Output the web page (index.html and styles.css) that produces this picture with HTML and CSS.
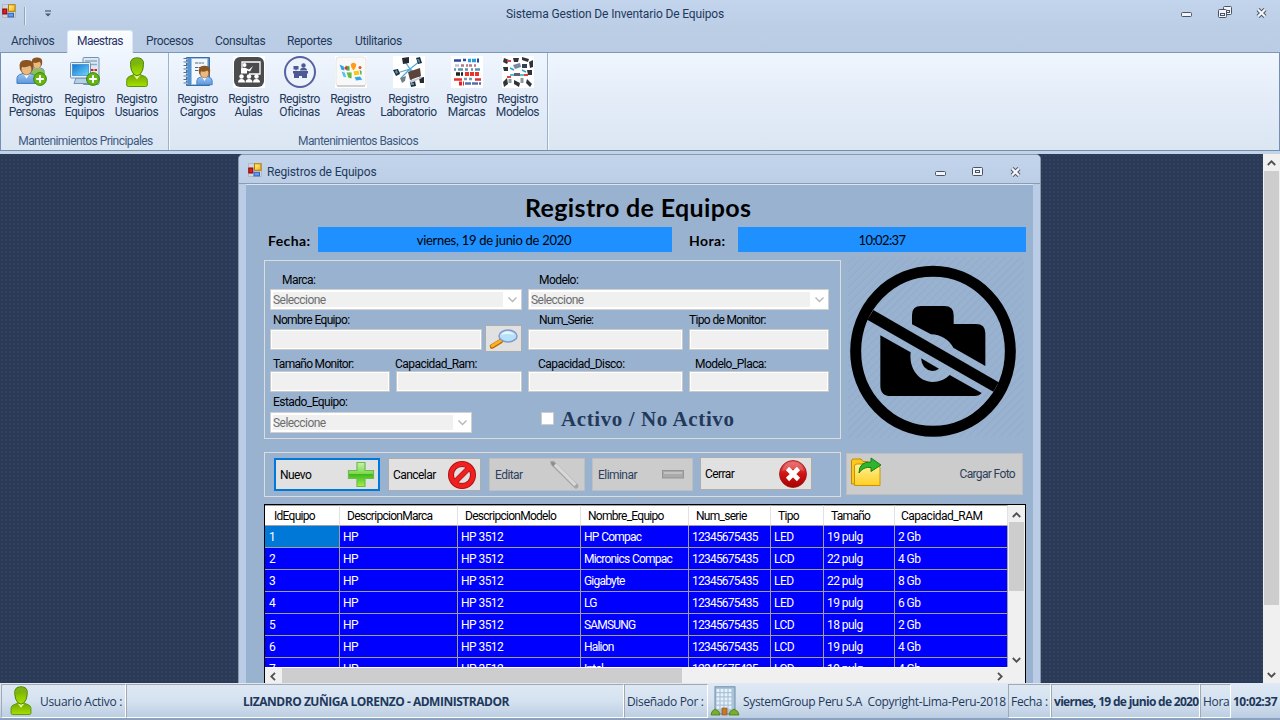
FILE: index.html
```html
<!DOCTYPE html>
<html lang="es">
<head>
<meta charset="utf-8">
<title>Sistema Gestion De Inventario De Equipos</title>
<link rel="stylesheet" href="styles.css">
</head>
<body>
<svg class="defs" width="0" height="0">
  <defs>
    <linearGradient id="gGreen" x1="0" y1="0" x2="0" y2="1"><stop offset="0" stop-color="#6fa800"/><stop offset="1" stop-color="#a8e000"/></linearGradient>
    <linearGradient id="gBlue" x1="0" y1="0" x2="0" y2="1"><stop offset="0" stop-color="#9cc8f4"/><stop offset="1" stop-color="#5d97dc"/></linearGradient>
    <linearGradient id="gScreen" x1="0" y1="0" x2="1" y2="1"><stop offset="0" stop-color="#1277d0"/><stop offset="1" stop-color="#6fd4fb"/></linearGradient>
    <linearGradient id="gYellow" x1="0" y1="0" x2="1" y2="1"><stop offset="0" stop-color="#fff3a0"/><stop offset="1" stop-color="#f0b400"/></linearGradient>
    <linearGradient id="gFolder" x1="0" y1="0" x2="0" y2="1"><stop offset="0" stop-color="#fff09a"/><stop offset="1" stop-color="#ffcf22"/></linearGradient>
    <linearGradient id="gPlus" x1="0" y1="0" x2="0" y2="1"><stop offset="0" stop-color="#c8f2a8"/><stop offset=".46" stop-color="#7fd850"/><stop offset=".5" stop-color="#3fb81c"/><stop offset="1" stop-color="#a4f04a"/></linearGradient>
    <linearGradient id="gRed" x1="0" y1="0" x2="0" y2="1"><stop offset="0" stop-color="#e86060"/><stop offset=".5" stop-color="#cf1414"/><stop offset="1" stop-color="#a80000"/></linearGradient>
    <symbol id="user" viewBox="0 0 22 31">
      <path d="M.7 28 V23.500 Q.7 20 5 18.800 L8 17.500 H14 L17 18.800 Q21.300 20 21.300 23.500 V28 Q21.300 29.500 19.500 29.500 H2.500 Q.7 29.500 .7 28Z" fill="url(#gGreen)" stroke="#5c9410" stroke-width="1"/>
      <path d="M7.500 18 L11 22.500 L14.500 18 Z" fill="#e6f3a0"/>
      <path d="M4.500 7.500 Q4 .8 11 .8 Q18 .8 17.500 7.500 Q17.500 14 14 17.500 Q11 20 8 17.500 Q4.500 14 4.500 7.500Z" fill="url(#gGreen)" stroke="#4b8400" stroke-width="1"/>
      <path d="M5 8.500 Q8 9.500 12 6.800 Q15 6.300 17 8.500 Q17.500 1.300 11 1.300 Q4.500 1.300 5 8.500Z" fill="#7cb414"/>
    </symbol>
    <symbol id="man" viewBox="0 0 22 26">
      <path d="M1 25 V20 Q1 16 6 15 L8 14 H14 L16 15 Q21 16 21 20 V25Z" fill="url(#gBlue)" stroke="#3f78c4" stroke-width="1"/>
      <path d="M8 15 L11 20 L14 15Z" fill="#fff"/>
      <ellipse cx="11" cy="9" rx="6" ry="7" fill="#e9b982" stroke="#94602a" stroke-width=".8"/>
      <path d="M4 10 Q2 0 11 .5 Q20 0 18 10 L16 13 Q17 8 14.500 6.500 Q10 9 6.500 7.500 Q5 9 6 13Z" fill="#8a5520"/>
    </symbol>
    <symbol id="add" viewBox="0 0 14 14">
      <circle cx="7" cy="7" r="6.400" fill="#66b510" stroke="#2f8000" stroke-width=".9"/><path d="M7 3.200V10.800M3.200 7H10.800" stroke="#fff" stroke-width="2"/>
    </symbol>
    <symbol id="app" viewBox="0 0 14 14">
      <path d="M.5 .5H13.500V13.500H.5Z" fill="#cdd5de" stroke="#b5b9bc"/>
      <rect x="6.500" y=".8" width="6.500" height="6.500" fill="url(#gYellow)" stroke="#b67800"/>
      <rect x=".8" y="5" width="4" height="5" fill="#d62222" stroke="#8d0000"/>
      <rect x="6" y="9.300" width="5.500" height="3.600" fill="#5f9cf0" stroke="#2f62c0"/>
    </symbol>
    <symbol id="close" viewBox="0 0 11 10">
      <path d="M2 1.500 L9 8.500 M9 1.500 L2 8.500" stroke="#4a5364" stroke-width="4.200"/><path d="M2 1.500 L9 8.500 M9 1.500 L2 8.500" stroke="#f3f6fb" stroke-width="2.300"/>
    </symbol>
  </defs>
</svg>

<header class="titlebar">
  <svg class="app-icon" width="14" height="14"><use href="#app"/></svg>
  <span class="quick-sep"></span>
  <svg class="quick-menu" width="6" height="7" viewBox="0 0 6 7"><path d="M0 1H6" stroke="#4b5668" stroke-width="1.200"/><path d="M0 3.500H6L3 6.500Z" fill="#4b5668"/></svg>
  <span class="app-title">Sistema Gestion De Inventario De Equipos</span>
  <div class="win-controls">
    <svg width="11" height="5" class="min"><rect x=".5" y=".5" width="10" height="4" rx="1" fill="#f1f5fa" stroke="#4a5364"/></svg>
    <svg width="14" height="12" class="restore"><rect x="5.500" y=".5" width="8" height="8" rx="1" fill="#f1f5fa" stroke="#4a5364"/><rect x="7.500" y="4.500" width="4" height="2" fill="none" stroke="#4a5364"/><rect x=".5" y="3.500" width="8" height="8" rx="1" fill="#f1f5fa" stroke="#4a5364"/><rect x="2.500" y="7.500" width="4" height="2" fill="#f1f5fa" stroke="#4a5364"/></svg>
    <svg width="11" height="10" class="cls"><use href="#close"/></svg>
  </div>
</header>

<nav class="tabs">
  <span class="tab archivos">Archivos</span>
  <span class="tab active">Maestras</span>
  <span class="tab procesos">Procesos</span>
  <span class="tab consultas">Consultas</span>
  <span class="tab reportes">Reportes</span>
  <span class="tab utilitarios">Utilitarios</span>
</nav>

<section class="ribbon">
  <div class="group principal">
    <div class="tools">
      <div class="tool w52">
        <svg width="32" height="32"><use href="#man" x="13" y="0" width="16" height="21"/><path d="M15 20V17Q15 14 19 13H25Q29 14 29 17V20Z" fill="#8dbf55"/><use href="#man" x="0" y="3" width="21" height="26"/><use href="#add" x="17" y="16" width="14" height="14"/></svg>
        <span>Registro<br>Personas</span></div>
      <div class="tool w53">
        <svg width="32" height="32"><rect x="14" y="1.500" width="16" height="27" rx="1" fill="#dbe8f3" stroke="#6f93b5"/><path d="M16 5H28M16 8.500H28" stroke="#8eabc4" stroke-width="1.300"/><path d="M22 14h6" stroke="#e02020" stroke-width="2" stroke-dasharray="2.500 1"/><path d="M7 22L5 27.500H19L17 22Z" fill="#b8d0e4" stroke="#6f93b5"/><rect x="1.500" y="6.500" width="20" height="15.500" rx="1" fill="#e9f2fa" stroke="#6f93b5"/><rect x="3.500" y="8.500" width="16" height="11" fill="url(#gScreen)" stroke="#2a78c0" stroke-width=".6"/><use href="#add" x="17" y="16" width="14" height="14"/></svg>
        <span>Registro<br>Equipos</span></div>
      <div class="tool">
        <svg width="32" height="32"><use href="#user" x="5" y="1" width="22" height="31"/></svg>
        <span>Registro<br>Usuarios</span></div>
    </div>
    <div class="group-name">Mantenimientos Principales</div>
  </div>
  <div class="group basicos">
    <div class="tools">
      <div class="tool">
        <svg width="32" height="32"><path d="M4.500 1.500H27.500V29.500H4.500Z" fill="#5592cf" stroke="#3a6ea5"/><path d="M9.500 2.500H25.500V28.500H9.500Z" fill="#f2f8fd" stroke="#9cc0e0" stroke-width=".7"/><path d="M3.500 2V29" stroke="#fff" stroke-width="4" stroke-dasharray="1.500 2"/><path d="M3.500 2V29" stroke="#4d6f92" stroke-width="4" stroke-dasharray="1 2.500"/><path d="M13 7h9M13 11.500h5M13 14.500h5" stroke="#567" stroke-width="1" stroke-dasharray="3 .6"/><use href="#man" x="14" y="9" width="17" height="21"/></svg>
        <span>Registro<br>Cargos</span></div>
      <div class="tool">
        <svg width="32" height="32"><rect width="32" height="32" fill="#fff"/><rect x="1" y="1" width="30" height="30" rx="6" fill="#4b4b4d"/><path d="M9 15V6H27V18H16" fill="none" stroke="#fff" stroke-width="1.300"/><circle cx="11.500" cy="9" r="2" fill="#fff"/><path d="M8 17.500V13Q9 11.500 12 11.800L16 13.500L20 10L17 15.500L14 14.500V17.500Z" fill="#fff"/><g fill="#fff"><circle cx="8.500" cy="20.500" r="2.200"/><circle cx="16" cy="20.500" r="2.200"/><circle cx="23.500" cy="20.500" r="2.200"/><path d="M5 26.500Q5 23 8.500 23Q12 23 12 26.500ZM12.500 26.500Q12.500 23 16 23Q19.500 23 19.500 26.500ZM20 26.500Q20 23 23.500 23Q27 23 27 26.500Z"/></g></svg>
        <span>Registro<br>Aulas</span></div>
      <div class="tool">
        <svg width="32" height="32"><circle cx="16" cy="16" r="15" fill="#edf3fb" stroke="#5661a0" stroke-width="2"/><g fill="#4c5995"><path d="M9 15H24V17.500H23V22H18V20H15V22H10V17.500H9Z"/><circle cx="19.500" cy="9.500" r="2.200"/><path d="M16 14.500Q16 11.800 19.500 11.800Q23 11.800 23 14.500Z"/><path d="M9.500 10H14.500V13.500H12.500V14.500H11.500V13.500H9.500Z"/></g></svg>
        <span>Registro<br>Oficinas</span></div>
      <div class="tool">
        <svg width="32" height="32"><rect width="32" height="32" fill="#fff"/><rect x="1" y="1" width="30" height="29" rx="3" fill="#f8f8f8" stroke="#e4e4e4"/><path d="M2 30H30" stroke="#c6c6c6" stroke-width="1.500"/><g stroke="#fff" stroke-width=".8"><path d="M4 8L9 10L10 15L6 14Z" fill="#30a0e0"/><path d="M10 9L15 10V15L11 15Z" fill="#4caf50"/><path d="M6 15L10 16L12 22L8 21Z" fill="#58c1f0"/><path d="M11 16L17 16L17 23L13 22Z" fill="#65b946"/><path d="M18 15L24 14L25 19L19 20Z" fill="#ffc61a"/><path d="M19 21L25 20L28 24L21 25Z" fill="#32a6df"/><path d="M24 13L27 15L27 19L25 19Z" fill="#4caf50"/></g><path d="M18.500 14.500Q15 10 16 8Q18.500 5.500 21 8Q22 10 18.500 14.500Z" fill="#ff9d16"/><circle cx="11" cy="12" r="1.600" fill="#e53525"/><circle cx="25" cy="11.500" r="1.500" fill="#e55025"/></svg>
        <span>Registro<br>Areas</span></div>
      <div class="tool w65">
        <svg width="32" height="32"><rect width="32" height="32" fill="#fff"/><path d="M4 17L17 13L27 5M17 13L11 4M17 13L19 28M17 13L29 23M17 13L8 22" stroke="#55a8d4" stroke-width="1.300" fill="none"/><g fill="#252a30"><path d="M9 2L16 1L16 7L10 8Z"/><path d="M23 2L27 1L29 7L25 8Z"/><path d="M0 14L5 13L7 18L3 20Z"/><path d="M17 26L22 25L23 30L18 31Z"/><path d="M26 22L31 21L31 27L27 27Z"/></g><path d="M15 16L27 12L28 20L17 24Z" fill="#5a443b"/><path d="M7 22L13 20L12 25L9 27Z" fill="#73808c"/><path d="M16 25L28 21L29 22L18 27Z" fill="#ccd"/><g fill="#3f98c8"><path d="M2 15L4 14L5 17L3 18Z"/><path d="M24 3L26 3L27 6L26 7Z"/><path d="M18 27h3v2h-3z"/></g></svg>
        <span>Registro<br>Laboratorio</span></div>
      <div class="tool">
        <svg width="32" height="32"><rect width="32" height="32" fill="#fff"/><g fill="none" stroke-width="2.400"><path d="M3 4.500H10M12 4H15" stroke="#2748a0"/><path d="M17 4.500H20M21 4.500H25" stroke="#2a9be0" stroke-width="3.500"/><path d="M26 4.500H28" stroke="#2748a0" stroke-width="4"/><path d="M10 9.500H26" stroke="#b8777f" stroke-dasharray="3 2 2 1"/><path d="M4 9.500H8" stroke="#b8c3d0"/><path d="M3 13.500H29" stroke="#5a93ad" stroke-dasharray="2 2 5 2 3 3"/><path d="M5 18H12" stroke="#222" stroke-width="3.500" stroke-dasharray="4 1"/><path d="M14 18H28" stroke="#e8352a" stroke-width="4" stroke-dasharray="4 1"/><path d="M3 23.500H11M24 23.500H30" stroke="#e23131"/><path d="M13 23H22" stroke="#7d97b5" stroke-dasharray="3 2"/></g><path d="M14 27.500H30" stroke="#5370b0" stroke-width="2.500" stroke-dasharray="6 1"/><path d="M8 27.500H13" stroke="#d22" stroke-width="4" stroke-dasharray="3 1"/></svg>
        <span>Registro<br>Marcas</span></div>
      <div class="tool">
        <svg width="32" height="32"><rect width="32" height="32" fill="#fff"/><g fill="#30333a"><path d="M2 2L7 4L5 8L1 6Z"/><path d="M11 2H17L16 6H12Z"/><path d="M20 1L27 3L26 6L20 4Z"/><path d="M27 6L31 4V11L28 12Z"/><path d="M1 11H6V15H2Z"/><path d="M25 14H30V19H26Z"/><path d="M1 26L5 22L6 28L2 31Z"/><path d="M12 24L18 27L17 31L12 28Z"/><path d="M25 23L30 28L28 31L24 27Z"/></g><path d="M11 9L18 7L19 11L13 13Z" fill="#7888a0"/><path d="M20 8H25V12H20Z" fill="#343f55"/><path d="M8 12L12 14M20 14L24 16M8 19H23" stroke="#30a6bd" stroke-width="1.500"/><path d="M12 17H18V20H12Z" fill="#5a6375"/><path d="M5 5h4M22 19h4M5 21h4" stroke="#e34045" stroke-width="2"/><path d="M20 22V27M8 23V27" stroke="#899" stroke-width="3"/></svg>
        <span>Registro<br>Modelos</span></div>
    </div>
    <div class="group-name">Mantenimientos Basicos</div>
  </div>
</section>

<main class="workspace">
  <div class="mdi">
    <div class="window">
      <div class="window-title">
        <svg width="14" height="14"><use href="#app"/></svg>
        <span class="window-name">Registros de Equipos</span>
        <div class="child-controls">
          <svg width="11" height="5" class="min"><rect x=".5" y=".5" width="10" height="4" rx="1" fill="#f1f5fa" stroke="#4a5364"/></svg>
          <svg width="11" height="9"><rect x=".5" y=".5" width="10" height="8" rx="1" fill="#f1f5fa" stroke="#4a5364"/><rect x="3.500" y="3.500" width="4" height="2" fill="none" stroke="#4a5364"/></svg>
          <svg width="11" height="10"><use href="#close"/></svg>
        </div>
      </div>
      <div class="form">
        <h1>Registro de Equipos</h1>
        <div class="when">
          <b class="lbl-fecha">Fecha:</b><div class="stamp date"><span>viernes, 19 de junio de 2020</span></div>
          <b class="lbl-hora">Hora:</b><div class="stamp time"><span>10:02:37</span></div>
        </div>
        <div class="top">
          <fieldset class="fields">
            <div class="row">
              <label class="f252 in12">Marca:<span class="combo">Seleccione<svg width="9" height="6"><path d="M.5 .5L4.500 4.500L8.500 .5"/></svg></span></label>
              <label class="f301 in11">Modelo:<span class="combo">Seleccione<svg width="9" height="6"><path d="M.5 .5L4.500 4.500L8.500 .5"/></svg></span></label>
            </div>
            <div class="row r2">
              <label class="f212 in3">Nombre Equipo:<span class="box"></span></label>
              <button class="search"><svg width="28" height="20" viewBox="0 0 28 20"><path d="M2 17.500L11 12" stroke="#b06a00" stroke-width="4.500" stroke-linecap="round"/><path d="M2 17L11 11.500" stroke="#ffb01c" stroke-width="2.800" stroke-linecap="round"/><ellipse cx="18" cy="7" rx="9" ry="6" fill="#b5e1fb" stroke="#8797c8" stroke-width="1.500"/><path d="M11 6Q13 2 18 2.500Q23 3 24 6Q17 4 11 6Z" fill="#e7f7ff"/></svg></button>
              <label class="f155 in11">Num_Serie:<span class="box"></span></label>
              <label class="f140">Tipo de Monitor:<span class="box"></span></label>
            </div>
            <div class="row r3">
              <label class="f120 in3">Tamaño Monitor:<span class="box"></span></label>
              <label class="f126 inm1">Capacidad_Ram:<span class="box"></span></label>
              <label class="f155 in10">Capacidad_Disco:<span class="box"></span></label>
              <label class="f140 in6">Modelo_Placa:<span class="box"></span></label>
            </div>
            <div class="row r4">
              <label class="f202 in3">Estado_Equipo:<span class="combo">Seleccione<svg width="9" height="6"><path d="M.5 .5L4.500 4.500L8.500 .5"/></svg></span></label>
              <div class="check"><i></i><span>Activo / No Activo</span></div>
            </div>
          </fieldset>
          <div class="photo">
            <svg width="176" height="181" viewBox="636 6 528 543"><ellipse cx="891" cy="289" rx="232" ry="240" fill="none" stroke="#000" stroke-width="33"/><path d="M712 165L1088 382L1072 410L694 194Z"/><path d="M828 208V180Q828 153 855 153H925Q953 153 953 180V207H1020Q1048 207 1048 235V333L952 278Q930 240 885 238Z"/><path d="M733 241L824 292C818 342 850 381 890 381Q920 381 941 360L1037 414Q1030 423 1015 423H765Q733 423 733 392Z"/><path d="M855 310L909 341Q900 348 889 348Q858 345 855 310Z"/></svg>
          </div>
        </div>
        <div class="actions">
          <div class="buttons">
            <button class="btn nuevo"><span>Nuevo</span><svg width="28" height="27"><path d="M10 1.500H18V9.500H26.500V17.500H18V25.500H10V17.500H1.500V9.500H10Z" fill="url(#gPlus)" stroke="#6dbc52" stroke-width="1.200"/></svg></button>
            <button class="btn cancelar"><span>Cancelar</span><svg width="28" height="28"><circle cx="14" cy="14" r="11" fill="none" stroke="#a80e0e" stroke-width="6"/><path d="M6.500 21.500L21.500 6.500" stroke="#b81212" stroke-width="5.500"/><circle cx="14" cy="14" r="11" fill="none" stroke="#ee2020" stroke-width="4.300"/><path d="M6.500 21.500L21.500 6.500" stroke="#ee2020" stroke-width="4"/></svg></button>
            <button class="btn editar off"><span>Editar</span><svg width="30" height="28"><path d="M3 2.500L26 25" stroke="#a6a6a6" stroke-width="5" stroke-linecap="round"/><path d="M4.500 3L25.500 24" stroke="#d8d8d8" stroke-width="3.200"/><path d="M0 0L6 2.500L3 5.500Z" fill="#8d8d8d"/></svg></button>
            <button class="btn eliminar off"><span>Eliminar</span><svg width="23" height="9"><rect x=".5" y=".5" width="21" height="7.500" fill="#a9a9a9" stroke="#949494"/><path d="M2 2H20V4H2Z" fill="#c2c2c2"/></svg></button>
            <button class="btn cerrar"><span>Cerrar</span><svg width="28" height="28"><circle cx="14" cy="14" r="13.500" fill="url(#gRed)" stroke="#9c1414" stroke-width=".8"/><path d="M3 11Q5 2 14 2Q23 2 25 11Q14 7 3 11Z" fill="#f2a0a0" opacity=".35"/><path d="M8.500 8.500L19.500 19.500M19.500 8.500L8.500 19.500" stroke="#fff" stroke-width="4.600"/></svg></button>
          </div>
          <button class="btn cargar off"><svg width="32" height="30"><path d="M1.500 27V4Q1.500 2 3.500 2H11L13 4.500H18V27Z" fill="#fcc81b" stroke="#c28a00"/><path d="M4.500 28.500V9Q4.500 7 7 7H13L15 9H28Q30 9 30 11V28.500Z" fill="url(#gFolder)" stroke="#c99400"/><path d="M9 16Q9 4.500 21 5V1L31 8L21 14.500V10.500Q13 9.500 9 16Z" fill="#2fb52d" stroke="#188019"/></svg><span>Cargar Foto</span></button>
        </div>
        <div class="grid">
          <div class="grid-main">
            <div class="cells">
              <div class="tr head"><span>IdEquipo</span><span>DescripcionMarca</span><span>DescripcionModelo</span><span>Nombre_Equipo</span><span>Num_serie</span><span>Tipo</span><span>Tamaño</span><span>Capacidad_RAM</span></div>
              <div class="tr"><span class="sel">1</span><span>HP</span><span>HP 3512</span><span>HP Compac</span><span>12345675435</span><span>LED</span><span>19 pulg</span><span>2 Gb</span></div>
              <div class="tr"><span>2</span><span>HP</span><span>HP 3512</span><span>Micronics Compac</span><span>12345675435</span><span>LCD</span><span>22 pulg</span><span>4 Gb</span></div>
              <div class="tr"><span>3</span><span>HP</span><span>HP 3512</span><span>Gigabyte</span><span>12345675435</span><span>LED</span><span>22 pulg</span><span>8 Gb</span></div>
              <div class="tr"><span>4</span><span>HP</span><span>HP 3512</span><span>LG</span><span>12345675435</span><span>LED</span><span>19 pulg</span><span>6 Gb</span></div>
              <div class="tr"><span>5</span><span>HP</span><span>HP 3512</span><span>SAMSUNG</span><span>12345675435</span><span>LCD</span><span>18 pulg</span><span>2 Gb</span></div>
              <div class="tr"><span>6</span><span>HP</span><span>HP 3512</span><span>Halion</span><span>12345675435</span><span>LCD</span><span>19 pulg</span><span>4 Gb</span></div>
              <div class="tr"><span>7</span><span>HP</span><span>HP 3512</span><span>Intel</span><span>12345675435</span><span>LCD</span><span>19 pulg</span><span>4 Gb</span></div>
            </div>
            <div class="hscroll"><svg width="6" height="9"><path d="M5 .8L1.300 4.500L5 8.200"/></svg><i></i><svg class="right" width="6" height="9"><path d="M1 .8L4.700 4.500L1 8.200"/></svg></div>
          </div>
          <div class="vscroll"><svg width="9" height="6"><path d="M.8 5L4.500 1.300L8.200 5"/></svg><i></i><svg class="down" width="9" height="6"><path d="M.8 1L4.500 4.700L8.200 1"/></svg></div>
        </div>
      </div>
    </div>
  </div>
  <div class="page-scroll"><svg width="9" height="6"><path d="M.8 5L4.500 1.300L8.200 5"/></svg><i></i><svg class="down" width="9" height="6"><path d="M.8 1L4.500 4.700L8.200 1"/></svg></div>
</main>

<footer class="status">
  <div class="cell s-user"><svg width="22" height="30"><use href="#user"/></svg><span>Usuario Activo :</span></div>
  <div class="cell s-name"><b>LIZANDRO ZUÑIGA LORENZO - ADMINISTRADOR</b></div>
  <div class="cell s-by"><span>Diseñado Por :</span></div>
  <div class="cell plain s-copy"><svg width="28" height="31"><rect x="4" y=".8" width="20" height="27" fill="#a9c3d9" stroke="#728da5"/><path d="M7 3V23M11 3V23M15 3V23M19 3V23" stroke="#e8f2fa" stroke-width="2.800" stroke-dasharray="3 1.200"/><rect x="11" y="22" width="5" height="7" fill="#c7762a" stroke="#8a4d12" stroke-width=".6"/><path d="M0 29Q0 25 4 23Q9 25 9 29ZM18 29Q18 25 23 23Q28 25 28 29Z" fill="#7aad2a" stroke="#487c10" stroke-width=".8"/></svg><span>SystemGroup Peru S.A&nbsp; Copyright-Lima-Peru-2018</span></div>
  <div class="cell s-fecha"><span>Fecha :</span></div>
  <div class="cell s-date"><b>viernes, 19 de junio de 2020</b></div>
  <div class="cell s-hora"><span>Hora</span></div>
  <div class="cell plain s-time"><b>10:02:37</b></div>
</footer>
</body>
</html>
```
FILE: styles.css
```css
* { box-sizing: border-box; }
body { margin: 0; width: 1280px; height: 720px; overflow: hidden; display: flex; flex-direction: column; font: 12px/14px Roboto, "Liberation Sans", sans-serif; color: #1e395b; background: #bdcee5; white-space: nowrap; }
svg { display: block; flex: none; overflow: visible; }
.defs { position: absolute; }
button { font: inherit; padding: 0; }

/* title bar */
.titlebar { height: 28px; display: flex; align-items: flex-start; background: linear-gradient(#c3d5ed, #bccee6); flex: none; }
.app-icon { margin: 4px 0 0 2px; }
.quick-sep { width: 2px; height: 18px; margin: 7px 0 0 8px; background: #94a5bd; border-right: 1px solid #e5edf7; }
.quick-menu { margin: 10px 0 0 19px; }
.app-title { margin: 7px 0 0 455px; width: 218px; letter-spacing: -.14px; }
.win-controls { margin-left: auto; display: flex; padding-right: 13px; }
.win-controls .min { margin: 12px 26px 0 0; }
.win-controls .restore { margin: 6px 24px 0 0; }
.win-controls .cls { margin-top: 8px; }

/* tabs */
.tabs { height: 25px; flex: none; display: flex; padding-top: 2px; background: linear-gradient(#bccee6, #b9cce4); border-bottom: 1px solid #7b98ba; }
.tab { height: 22px; line-height: 22px; letter-spacing: -.38px; }
.archivos { width: 67px; padding-left: 11px; }
.tab.active { width: 66px; height: 23px; line-height: 20px; padding-left: 9px; background: linear-gradient(#fbfdff, #eff6fe); border: 1px solid #dae6f5; border-bottom: 0; border-radius: 3px 3px 0 0; color: #2a3268; letter-spacing: -.5px; }
.procesos { width: 82px; padding-left: 13px; }
.consultas { width: 72px; }
.reportes { width: 68px; }

/* ribbon */
.ribbon { height: 98px; flex: none; display: flex; background: linear-gradient(#eff6fe, #e5edf9 42%, #dbe6f3); border: 1px solid #7390b3; border-top: 0; }
.group { display: flex; flex-direction: column; border-right: 1px solid #9bb1cd; box-shadow: 1px 0 #f3f8fd; padding-top: 3px; height: 97px; }
.principal { width: 168px; padding-left: 5px; }
.basicos { width: 379px; padding-left: 3px; }
.tools { display: flex; height: 79px; }
.tool { width: 51px; display: flex; flex-direction: column; align-items: center; text-align: center; line-height: 13px; gap: 5px; letter-spacing: -.45px; }
.w52 { width: 52px; } .w53 { width: 53px; } .w65 { width: 65px; }
.group-name { text-align: center; line-height: 18px; color: #3c5a82; letter-spacing: -.55px; }
.group-name { margin-left: -3px; }

/* workspace */
.workspace { height: 532px; flex: none; display: flex; background: radial-gradient(circle, #32445f .6px, transparent 1px) 0 0/4px 4px, #2b3b57; border-top: 3px solid #c3d2e5; }
.mdi { width: 1263px; padding-left: 238px; overflow: hidden; }
.window { width: 803px; height: 640px; border: 1px solid #8b98ac; border-radius: 5px 5px 0 0; background: #bbcde6; }
.window-title { height: 29px; display: flex; align-items: flex-start; padding: 8px 19px 0 9px; background: linear-gradient(#c3d5ed, #bccee6); border-bottom: 1px solid #8b9bb2; border-radius: 4px 4px 0 0; }
.window-name { margin: 2px 0 0 5px; letter-spacing: -.15px; }
.child-controls { margin-left: auto; display: flex; gap: 27px; padding-top: 4px; }
.child-controls .min { margin: 4px -1px 0 0; }
.form { margin: 0 7px; height: 600px; background: #99b2d0; border-top: 1px solid #d8e5f4; padding-left: 18px; color: #000; }
h1 { margin: 0; height: 42px; padding: 8px 0 0 261px; font: bold 25px/28px Lato, sans-serif; letter-spacing: .36px; }
.when { display: flex; align-items: center; height: 25px; font-family: Lato, sans-serif; font-size: 13px; }
.when b { padding-top: 3px; font-size: 14px; letter-spacing: .4px; }
.lbl-fecha { width: 54px; padding-left: 4px; }
.lbl-hora { width: 66px; padding-left: 17px; }
.stamp { height: 25px; background: #1e90ff; line-height: 27px; text-align: center; }
.date { width: 354px; padding-right: 2px; letter-spacing: -.28px; } .time { width: 288px; letter-spacing: -.6px; }
.top { display: flex; margin-top: 8px; }
.fields { margin: 0; width: 577px; height: 179px; border: 1px solid #dcdcdc; padding: 10px 0 0 5px; }
.row { display: flex; gap: 6px; height: 40px; letter-spacing: -.55px; }
.row label { display: flex; flex-direction: column; line-height: 18px; }
.r2 { height: 42px; letter-spacing: -.65px; } .r3 { height: 41px; }
.r3 label { padding-top: 4px; line-height: 14px; }
.r3 .f120 { letter-spacing: -.7px; }
.r4 label { margin-top: -2px; line-height: 20px; }
.in12 { text-indent: 12px; } .in11 { text-indent: 11px; } .in10 { text-indent: 10px; } .in6 { text-indent: 6px; } .in3 { text-indent: 3px; } .inm1 { text-indent: -1px; }
.f252 { width: 252px; } .f301 { width: 301px; } .f212 { width: 212px; } .f155 { width: 155px; } .f140 { width: 140px; } .f120 { width: 120px; } .f126 { width: 126px; } .f202 { width: 202px; }
.box { height: 21px; background: #f0f0f0; border: 1px solid #c9c9c9; box-shadow: inset 0 0 0 1px #fff; }
.combo { height: 21px; display: flex; align-items: center; justify-content: space-between; text-indent: 0; color: #6d6d6d; border: 1px solid #d0d0d0; padding: 0 4px 0 2px; background: linear-gradient(#f0f0f0, #f0f0f0) 2px 2px/calc(100% - 20px) 15px no-repeat #fff; }
.combo svg { fill: none; stroke: #b5b5b5; stroke-width: 1.300; }
.search { width: 37px; height: 27px; margin: 14px 0 0 -3px; border: 1px solid #adadad; background: #e1e1e1; display: flex; align-items: center; justify-content: center; }
.check { display: flex; align-items: center; height: 22px; margin: 14px 0 0 63px; color: #23395b; font: bold 21px/22px "Liberation Serif", serif; letter-spacing: .6px; }
.check i { width: 13px; height: 13px; background: #fff; border: 1px solid #ccc; margin: -1px 7px 0 0; }
.check span { margin-top: -1px; }
.photo { width: 176px; height: 181px; margin: -3px 0 0 7px; background: repeating-linear-gradient(135deg, #99b2d0 0 4px, #95aecd 4px 5.600px); }
.actions { display: flex; margin-top: 13px; }
.buttons { width: 577px; height: 45px; border: 1px solid #dcdcdc; display: flex; padding: 5px 0 0 9px; }
.btn { display: flex; align-items: center; justify-content: space-between; height: 33px; background: #e1e1e1; border: 1px solid #adadad; letter-spacing: -.55px; color: #000; }
.btn.off { background: #ccc; border-color: #bfbfbf; color: #2c3f5c; }
.nuevo { width: 106px; border: 2px solid #0078d7; padding: 0 3px 0 4px; }
.cancelar { width: 93px; margin-left: 8px; padding: 0 4px; }
.editar { width: 96px; margin-left: 8px; padding: 0 4px 0 5px; }
.eliminar { width: 101px; margin-left: 7px; padding: 0 7px 0 5px; }
.cerrar { width: 112px; margin-left: 7px; padding: 0 4px; margin-top: -1px; }
.cargar { width: 177px; height: 42px; margin: 1px 0 0 5px; padding: 0 7px 4px 3px; }
.cargar span { padding-top: 4px; letter-spacing: -.65px; }

/* equipment grid */
.grid { display: flex; width: 762px; height: 220px; margin-top: 7px; border: 1px solid #000; background: #f0f0f0; }
.grid-main { width: 743px; display: flex; flex-direction: column; }
.cells { height: 163px; overflow: hidden; background: #a0a0a0; border-bottom: 1px solid #fff; }
.tr { display: grid; grid-template-columns: 75px 118px 123px 108px 82px 53px 71px 113px; height: 22px; line-height: 23px; color: #fff; letter-spacing: -.55px; }
.tr span { background: #00f; border-right: 1px solid #a0a0a0; border-bottom: 1px solid #a0a0a0; padding-left: 3px; overflow: hidden; }
.tr span:nth-child(4) { letter-spacing: -.8px; word-spacing: .5px; }
.tr span:nth-child(5) { letter-spacing: -.77px; }
.tr .sel { background: #0078d7; }
.tr.head { height: 21px; color: #000; }
.tr.head span { background: #fff; border-right-color: #e2e2e2; border-top: 1px solid #a0a0a0; padding-left: 7px; line-height: 20px; letter-spacing: -.72px; }
.tr.head span:last-child { letter-spacing: -.5px; padding-left: 6px; }
.tr span:first-child { padding-left: 4px; }
.tr.head span:first-child { padding-left: 9px; }
.hscroll svg, .vscroll svg, .page-scroll svg { fill: none; stroke: #505050; stroke-width: 1.800; }
.hscroll { height: 17px; display: flex; align-items: center; padding-left: 5px; }
.hscroll i { width: 400px; height: 17px; background: #cdcdcd; margin: 0 315px 0 6px; }
.vscroll { width: 17px; height: 163px; display: flex; flex-direction: column; align-items: center; padding-top: 7px; }
.vscroll i { width: 15px; height: 69px; background: #cdcdcd; margin: 4px 0 66px; }
.page-scroll { width: 17px; background: #f0f0f0; display: flex; flex-direction: column; align-items: center; padding-top: 6px; }
.page-scroll i { width: 15px; height: 434px; background: #cdcdcd; margin: 5px 0 67px; }

/* status bar */
.status { height: 37px; flex: none; display: flex; background: linear-gradient(#dfe9f5, #d5e2f0 50%, #bccde2); border-bottom: 2px solid #8aa2bf; padding-left: 1px; font-family: "Open Sans", sans-serif; letter-spacing: -.3px; padding-top: 1px; }
.cell { height: 34px; display: flex; align-items: center; border: 1px solid #a3a9b1; border-right-color: #fff; border-bottom-color: #fff; padding: 2px 0 0 2px; }
.cell.plain { border-color: transparent; }
.s-user { width: 125px; padding: 0 0 0 8px; }
.s-user span { padding: 2px 0 0 8px; }
.s-name { width: 498px; justify-content: center; letter-spacing: -.48px; }
.s-by { width: 84px; letter-spacing: -.36px; }
.s-copy { width: 300px; padding: 0 0 0 2px; letter-spacing: -.34px; }
.s-copy span { padding: 2px 0 0 4px; }
.s-fecha { width: 43px; }
.s-date { width: 149px; letter-spacing: -.7px; }
.s-hora { width: 31px; }
.s-time { width: 48px; padding-left: 1px; letter-spacing: -.5px; }
```
